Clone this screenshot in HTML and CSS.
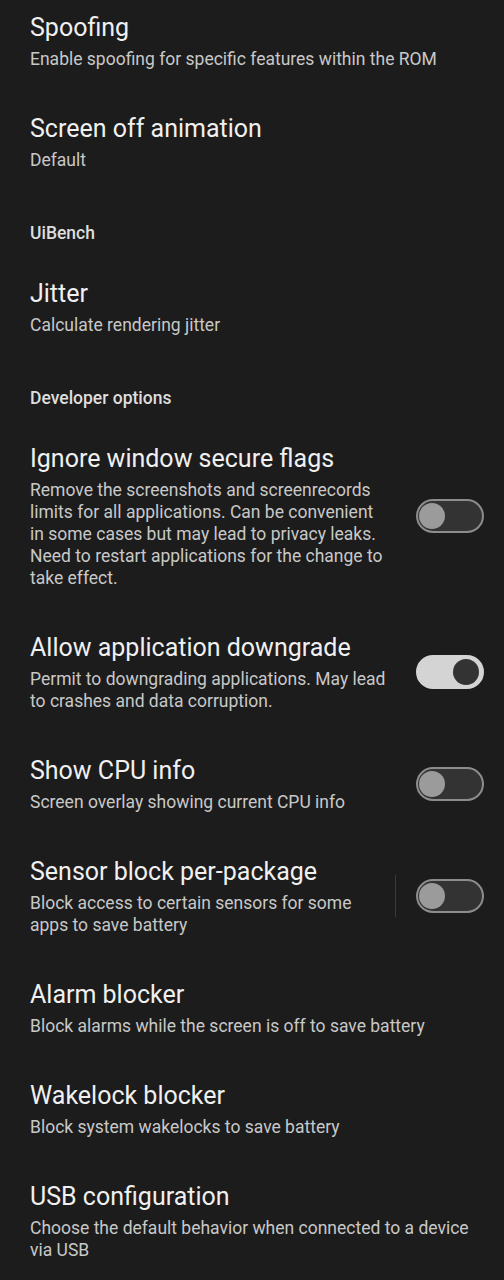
FILE: index.html
```html
<!DOCTYPE html>
<html>
<head>
<meta charset="utf-8">
<link rel="stylesheet" href="styles.css">
</head>
<body>
<div class="list">
  <div class="item">
    <div class="text">
      <div class="title">Spoofing</div>
      <div class="summary">Enable spoofing for specific features within the ROM</div>
    </div>
  </div>
  <div class="item">
    <div class="text">
      <div class="title">Screen off animation</div>
      <div class="summary">Default</div>
    </div>
  </div>
  <div class="header">UiBench</div>
  <div class="item">
    <div class="text">
      <div class="title">Jitter</div>
      <div class="summary">Calculate rendering jitter</div>
    </div>
  </div>
  <div class="header">Developer options</div>
  <div class="item">
    <div class="text">
      <div class="title">Ignore window secure flags</div>
      <div class="summary">Remove the screenshots and screenrecords limits for all applications. Can be convenient in some cases but may lead to privacy leaks. Need to restart applications for the change to take effect.</div>
    </div>
    <div class="switch"><div class="thumb"></div></div>
  </div>
  <div class="item">
    <div class="text">
      <div class="title">Allow application downgrade</div>
      <div class="summary">Permit to downgrading applications. May lead to crashes and data corruption.</div>
    </div>
    <div class="switch on"><div class="thumb"></div></div>
  </div>
  <div class="item">
    <div class="text">
      <div class="title">Show CPU info</div>
      <div class="summary">Screen overlay showing current CPU info</div>
    </div>
    <div class="switch"><div class="thumb"></div></div>
  </div>
  <div class="item">
    <div class="text">
      <div class="title">Sensor block per-package</div>
      <div class="summary">Block access to certain sensors for some apps to save battery</div>
    </div>
    <div class="divider"></div>
    <div class="switch after-divider"><div class="thumb"></div></div>
  </div>
  <div class="item">
    <div class="text">
      <div class="title">Alarm blocker</div>
      <div class="summary">Block alarms while the screen is off to save battery</div>
    </div>
  </div>
  <div class="item">
    <div class="text">
      <div class="title">Wakelock blocker</div>
      <div class="summary">Block system wakelocks to save battery</div>
    </div>
  </div>
  <div class="item">
    <div class="text">
      <div class="title">USB configuration</div>
      <div class="summary">Choose the default behavior when connected to a device via USB</div>
    </div>
  </div>
</div>
</body>
</html>
```
FILE: styles.css
```css
html, body {
  margin: 0;
  padding: 0;
  background: #1c1c1c;
  height: 100%;
  overflow: hidden;
}
body {
  font-family: Roboto, "Open Sans", sans-serif;
  color: #ececec;
}
.list {
  margin-top: -10px;
  display: flex;
  flex-direction: column;
}
.item {
  display: flex;
  align-items: center;
  padding: 21.5px 20px 21.5px 30px;
}
.text {
  flex: 1;
  min-width: 0;
}
.title {
  font-size: 25px;
  line-height: 32px;
  color: #f0f0f0;
  margin-bottom: 4px;
}
.summary {
  font-size: 17.5px;
  line-height: 22px;
  color: #c8c8c8;
}
.header {
  padding: 31px 30px 13px;
  font-size: 17.5px;
  line-height: 20px;
  font-weight: 500;
  color: #dedede;
}
.switch {
  flex: none;
  box-sizing: border-box;
  width: 68px;
  height: 34px;
  border-radius: 17px;
  border: 2px solid #8c8c8c;
  background: #333333;
  margin-left: 28px;
  display: flex;
  align-items: center;
  padding: 0 1px 0 0;
}
.switch .thumb {
  width: 26px;
  height: 26px;
  border-radius: 50%;
  background: #9b9b9b;
  margin-left: 0.5px;
}
.switch.on {
  background: #d4d4d4;
  border-color: #d4d4d4;
  justify-content: flex-end;
  padding: 0 3px;
}
.switch.on .thumb {
  background: #333333;
  margin-left: 0;
}
.divider {
  flex: none;
  width: 1px;
  height: 42px;
  background: #3a3a3a;
  margin-left: 7px;
}
.switch.after-divider {
  margin-left: 20px;
}
```
